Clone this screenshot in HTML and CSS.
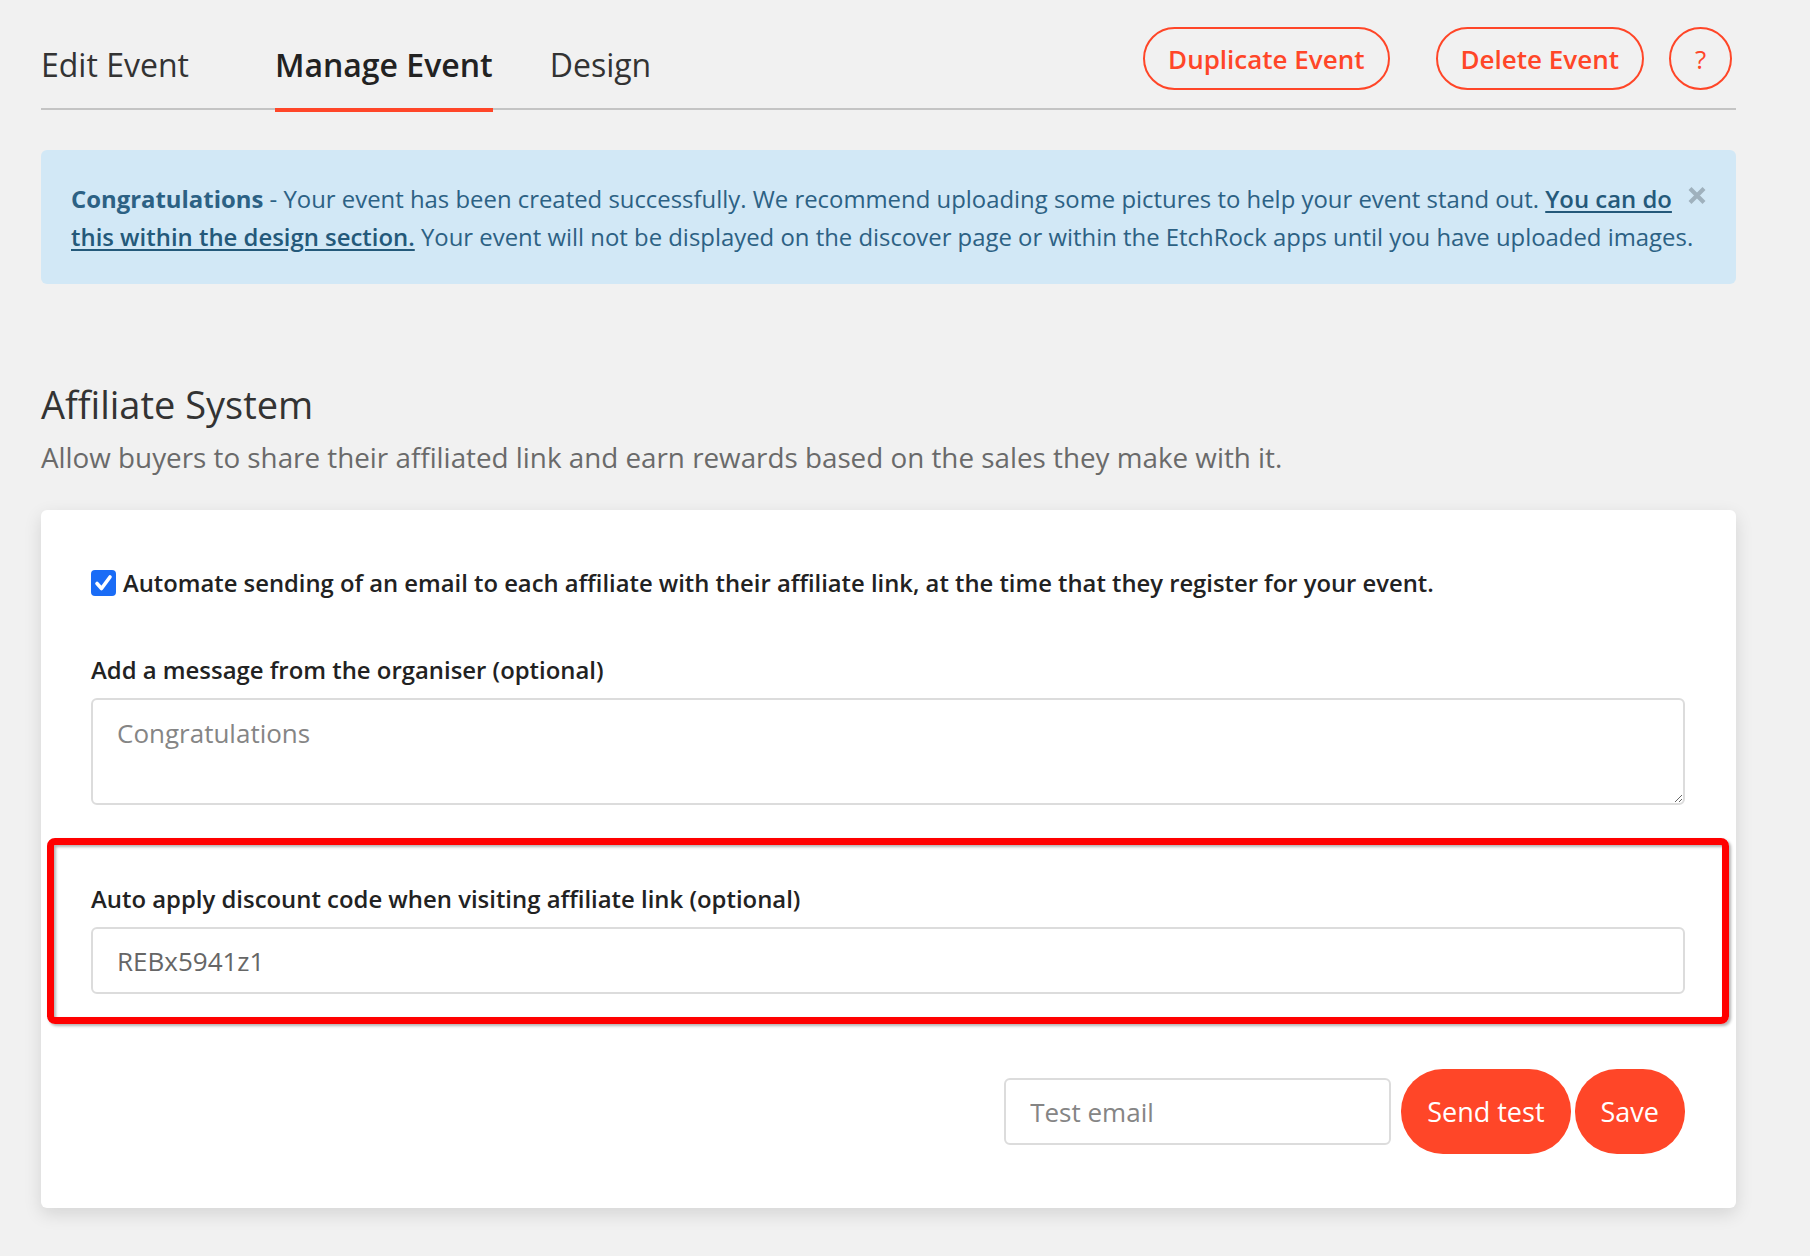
FILE: index.html
```html
<!DOCTYPE html>
<html lang="en">
<head>
  <meta charset="UTF-8" />
  <title>Manage Event - Affiliate System</title>
  <link rel="stylesheet" href="styles.css">
</head>
<body>

<div class="page">
  <header class="topbar">
    <a class="tab tab-edit" href="#">Edit Event</a>
    <a class="tab tab-manage active" href="#">Manage Event</a>
    <a class="tab" href="#">Design</a>

    <div class="actions">
      <button class="btn-outline btn-duplicate">Duplicate Event</button>
      <button class="btn-outline btn-delete">Delete Event</button>
      <button class="btn-outline btn-help">?</button>
    </div>
  </header>

  <div class="alert">
    <button class="alert-close" aria-label="Close">
      <svg width="20" height="17" viewBox="0 0 20 17"><path d="M3 1.5 L17 15.5 M17 1.5 L3 15.5" stroke="currentColor" stroke-width="4.2" stroke-linecap="butt"/></svg>
    </button>
    <strong>Congratulations</strong> - Your event has been created successfully. We recommend uploading some pictures to help your event stand out. <a href="#">You can do this within the design section.</a> Your event will not be displayed on the discover page or within the EtchRock apps until you have uploaded images.
  </div>

  <h1 class="section-title">Affiliate System</h1>
  <p class="section-sub">Allow buyers to share their affiliated link and earn rewards based on the sales they make with it.</p>

  <div class="card">
    <label class="check-row">
      <span class="checkbox">
        <svg width="25" height="26" viewBox="0 0 25 26"><path d="M6 13.5 L10.5 18.5 L19 7" fill="none" stroke="#fff" stroke-width="3.6" stroke-linecap="round" stroke-linejoin="round"/></svg>
      </span>
      Automate sending of an email to each affiliate with their affiliate link, at the time that they register for your event.
    </label>

    <label class="field-label" for="organiserMsg">Add a message from the organiser (optional)</label>
    <textarea id="organiserMsg" class="field field-area" placeholder="Congratulations"></textarea>

    <div class="highlight">
      <label class="field-label" for="discountCode">Auto apply discount code when visiting affiliate link (optional)</label>
      <input id="discountCode" class="field" type="text" value="REBx5941z1">
    </div>

    <div class="form-actions">
      <input class="field test-email" type="email" placeholder="Test email">
      <button class="btn-solid">Send test</button>
      <button class="btn-solid">Save</button>
    </div>
  </div>
</div>

</body>
</html>
```

FILE: styles.css
```css
body {
  margin: 0;
  background: #f1f1f1;
  font-family: "Open Sans", "Noto Sans", sans-serif;
  color: #333;
}
.page {
  width: 1695px;
  margin-left: 41px;
  padding-top: 27px;
  padding-bottom: 40px;
}

/* top tabs + actions */
.topbar {
  display: flex;
  align-items: flex-end;
  border-bottom: 2px solid #c4c4c4;
}
.tab {
  font-size: 32px;
  line-height: 44px;
  padding-bottom: 21px;
  color: #333;
  text-decoration: none;
}
.tab-edit {
  margin-right: 86px;
}
.tab-manage {
  margin-right: 57px;
}
.tab.active {
  font-weight: 600;
  color: #222;
  border-bottom: 4px solid #ff4628;
  margin-bottom: -4px;
}
.actions {
  margin-left: auto;
  margin-right: 4px;
  margin-bottom: 18px;
  display: flex;
}
.btn-outline {
  height: 63px;
  box-sizing: border-box;
  padding: 0 23px;
  border: 2px solid #ff4628;
  border-radius: 32px;
  background: transparent;
  color: #ff4628;
  font-family: inherit;
  font-size: 26px;
  font-weight: 600;
  cursor: pointer;
}
.btn-delete {
  margin-left: 46px;
}
.btn-help {
  margin-left: 25px;
  width: 63px;
  padding: 0;
  font-weight: 400;
}

/* alert */
.alert {
  margin-top: 40px;
  padding: 30px 20px 28px 30px;
  background: #d2e8f6;
  border-radius: 6px;
  color: #2c6184;
  font-size: 23.9px;
  line-height: 38px;
}
.alert strong {
  font-weight: 700;
}
.alert a {
  color: #24597a;
  font-weight: 600;
  text-decoration: underline;
  text-underline-offset: 3px;
}
.alert-close {
  float: right;
  margin: 7px 9px 0 4px;
  padding: 0;
  border: none;
  background: none;
  color: #9fb1bd;
  cursor: pointer;
}
.alert-close svg {
  display: block;
}

/* section heading */
.section-title {
  margin: 95px 0 0;
  font-size: 38px;
  line-height: 50px;
  font-weight: 400;
  color: #333;
}
.section-sub {
  margin: 8px 0 0;
  font-size: 27.8px;
  line-height: 40px;
  color: #6a6a6a;
}

/* card */
.card {
  margin-top: 33px;
  background: #fff;
  border-radius: 6px;
  box-shadow: 0 6px 18px rgba(0, 0, 0, 0.12);
  padding: 56px 51px 54px 50px;
}
.check-row {
  display: flex;
  align-items: center;
  font-size: 23.8px;
  line-height: 34px;
  font-weight: 600;
  color: #222;
  cursor: pointer;
}
.checkbox {
  width: 25px;
  height: 26px;
  margin-right: 7px;
  border-radius: 4px;
  background: #1a6cf6;
  flex-shrink: 0;
}
.checkbox svg {
  display: block;
}
.field-label {
  display: block;
  margin-top: 53px;
  margin-bottom: 11px;
  font-size: 23.9px;
  line-height: 34px;
  font-weight: 600;
  color: #222;
}
.field {
  display: block;
  width: 100%;
  box-sizing: border-box;
  height: 67px;
  padding: 0 24px;
  border: 2px solid #dcdcdc;
  border-radius: 6px;
  font-family: inherit;
  font-size: 26px;
  line-height: 36px;
  color: #666;
  background: #fff;
}
.field::placeholder {
  color: #858585;
}
.field-area {
  height: 107px;
  padding: 15px 24px;
  resize: vertical;
}

/* the red highlighted field */
.highlight {
  margin: 33px -44px 0 -44px;
  padding: 0 37px 23px 37px;
  border: 7px solid #ff0000;
  border-radius: 8px;
  box-shadow: 2px 2px 3px rgba(0, 0, 0, 0.3), inset 2px 2px 3px rgba(0, 0, 0, 0.3);
}
.highlight .field-label {
  margin-top: 37px;
}

.form-actions {
  margin-top: 45px;
  display: flex;
  justify-content: flex-end;
  align-items: center;
}
.test-email {
  width: 387px;
  margin-right: 10px;
}
.btn-solid {
  height: 85px;
  padding: 0 26px;
  border: none;
  border-radius: 42px;
  background: #ff4628;
  color: #fff;
  font-family: inherit;
  font-size: 27px;
  cursor: pointer;
}
.btn-solid + .btn-solid {
  margin-left: 4px;
}
```
